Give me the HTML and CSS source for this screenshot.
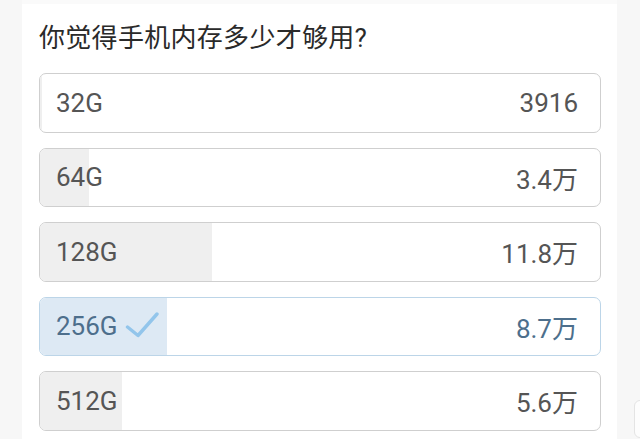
FILE: index.html
```html
<!DOCTYPE html>
<html lang="zh-CN">
<head>
    <meta charset="UTF-8">
    <meta name="viewport" content="width=device-width, initial-scale=1.0">
    <title>投票</title>
    <link rel="stylesheet" href="styles.css">
</head>
<body>
    <div class="panel">
        <div class="panel-top"></div>
        <h1 class="question">你觉得手机内存多少才够用?</h1>
        <div class="options">
            <div class="option">
                <div class="fill" style="width: 2px"></div>
                <span class="label">32G</span>
                <span class="count">3916</span>
            </div>
            <div class="option">
                <div class="fill" style="width: 49px"></div>
                <span class="label">64G</span>
                <span class="count">3.4万</span>
            </div>
            <div class="option">
                <div class="fill" style="width: 172px"></div>
                <span class="label">128G</span>
                <span class="count">11.8万</span>
            </div>
            <div class="option selected">
                <div class="fill" style="width: 127px"></div>
                <span class="label">256G<svg class="check" width="34" height="26" viewBox="0 0 34 26">
                        <path d="M2.5 15 L13 23.5 L32 2" fill="none" stroke="#92c5eb" stroke-width="3.4" stroke-linecap="round" stroke-linejoin="round"/>
                    </svg></span>
                <span class="count">8.7万</span>
            </div>
            <div class="option">
                <div class="fill" style="width: 82px"></div>
                <span class="label">512G</span>
                <span class="count">5.6万</span>
            </div>
        </div>
    </div>
    <div class="side-tab"></div>
</body>
</html>
```

FILE: styles.css
```css
body {
    margin: 0;
    background-color: #f7f7f7;
    font-family: Roboto, "Noto Sans CJK SC", sans-serif;
    height: 439px;
    overflow: hidden;
    position: relative;
}
.panel {
    margin: 0 23px 0 22px;
    background-color: #fff;
    padding: 0 16px 0 17px;
    height: 439px;
    box-sizing: border-box;
}
.panel-top {
    height: 4px;
    margin: 0 -16px 0 -17px;
    background-color: #fafafa;
}
.question {
    margin: 0;
    padding-top: 17px;
    font-size: 26px;
    line-height: 34px;
    font-weight: normal;
    color: #2a2a2a;
    letter-spacing: 0.3px;
}
.options {
    margin-top: 18px;
    display: flex;
    flex-direction: column;
    gap: 15px;
}
.option {
    position: relative;
    height: 59.5px;
    box-sizing: border-box;
    border: 1px solid #cfcfcf;
    border-radius: 7px;
    overflow: hidden;
    display: flex;
    align-items: center;
    justify-content: space-between;
    padding: 0 22px 0 16px;
    font-size: 26px;
    color: #555;
}
.fill {
    position: absolute;
    left: 0;
    top: 0;
    bottom: 0;
    background-color: #efefef;
}
.label, .count {
    position: relative;
    display: flex;
    align-items: center;
}
.option.selected {
    border-color: #bcd5e8;
    color: #4d6f8c;
}
.option.selected .fill {
    background-color: #dde9f4;
}
.check {
    margin-left: 7px;
    margin-top: -2px;
}
.side-tab {
    position: absolute;
    left: 634px;
    top: 400px;
    width: 30px;
    height: 36px;
    border: 1px solid #e4e4e4;
    border-radius: 6px;
    background-color: #fdfdfd;
}
```
